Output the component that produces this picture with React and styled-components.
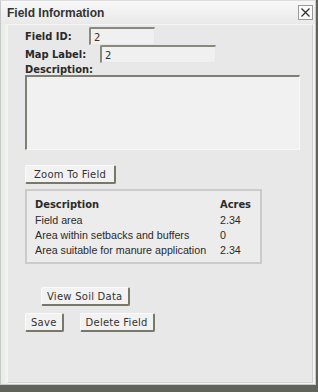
import React from 'react';
import styled, { createGlobalStyle } from 'styled-components';

const Global = createGlobalStyle`
  html, body { margin: 0; padding: 0; }
  body {
    width: 318px;
    height: 392px;
    overflow: hidden;
    background: #5f6359;
    font-family: "DejaVu Sans", Verdana, sans-serif;
  }
`;

const Dialog = styled.div`
  box-sizing: border-box;
  width: 316px;
  height: 385px;
  display: flex;
  flex-direction: column;
  background: linear-gradient(to right, #e6ece4, #f3f3f3 8px);
  border: 1px solid #c8c8c8;
  border-top-color: #dcdcdc;
`;

const TitleBar = styled.div`
  height: 23px;
  display: flex;
  align-items: center;
  justify-content: space-between;
  padding: 0 2px 0 6px;
  background: linear-gradient(to bottom, #f8f8f8, #e9e9e9);
`;

const Title = styled.span`
  font-family: "Liberation Sans", Arial, sans-serif;
  font-weight: bold;
  font-size: 12px;
  color: #333;
`;

const Close = styled.button`
  box-sizing: border-box;
  width: 15px;
  height: 15px;
  padding: 0;
  display: flex;
  align-items: center;
  justify-content: center;
  background: #fafafa;
  border: 1px solid #9a9a9a;
  cursor: pointer;
`;

const Panel = styled.div`
  flex: 1;
  margin: 0 2px 1px 6px;
  padding: 2px 0 0 17px;
  background: #e8e8e8;
  border: 1px solid #f6f6f6;
  border-right-color: #cfcfcf;
  border-bottom-color: #d4d4d4;
  display: flex;
  flex-direction: column;
  color: #222;
`;

const Row = styled.div`
  display: flex;
  align-items: center;
  height: ${p => p.h || 18}px;
`;

const Label = styled.label`
  font-family: "DejaVu Sans Condensed", "DejaVu Sans", sans-serif;
  font-weight: bold;
  font-size: 11px;
  width: ${p => p.w || 'auto'};
  color: #2a2a2a;
`;

const Input = styled.input`
  box-sizing: border-box;
  width: ${p => p.w}px;
  height: 18px;
  padding: 1px 3px 0;
  font-family: "DejaVu Sans", sans-serif;
  font-size: 10px;
  color: #333;
  background: #f0f0f0;
  border: 1px solid #e6e6e6;
  border-top: 2px solid #8a8a7c;
  border-left: 2px solid #8a8a7c;
  border-radius: 2px 0 0 0;
  outline: none;
`;

const TextArea = styled.textarea`
  display: block;
  box-sizing: border-box;
  width: 275px;
  height: 75px;
  margin: 0;
  resize: none;
  background: #f1f1f1;
  border: 1px solid #f8f8f8;
  border-top: 2px solid #7f7f72;
  border-left: 2px solid #7f7f72;
  outline: none;
`;

const Button = styled.button`
  box-sizing: border-box;
  height: 19px;
  padding: 0 ${p => (p.wide ? 8 : 5)}px;
  font-family: "DejaVu Sans", Verdana, sans-serif;
  font-size: 10px;
  letter-spacing: 0.25px;
  color: #333;
  background: #f2f2f2;
  border: 1px solid #fafafa;
  border-right: 2px solid #77776a;
  border-bottom: 2px solid #77776a;
  border-radius: 2px;
  cursor: pointer;
`;

const ButtonRow = styled.div`
  display: flex;
  gap: ${p => p.gap || 0}px;
  padding-left: ${p => p.indent || 0}px;
  margin-top: ${p => p.top || 0}px;
`;

const AreaBox = styled.div`
  box-sizing: border-box;
  width: 237px;
  margin-top: 5px;
  padding: 6px 8px 5px 8px;
  background: #ececec;
  border: 2px solid #cbcbcb;
`;

const AreaTable = styled.table`
  border-collapse: collapse;
  font-family: "Liberation Sans", Tahoma, Arial, sans-serif;
  font-size: 10.7px;
  color: #2a2a2a;
  width: 100%;

  th, td { padding: 0; text-align: left; height: 15px; }
  th { font-family: "DejaVu Sans Condensed", "DejaVu Sans", sans-serif; font-weight: bold; font-size: 11px; }
  td:last-child, th:last-child { width: 32px; }
`;

const rows = [
  ['Field area', '2.34'],
  ['Area within setbacks and buffers', '0'],
  ['Area suitable for manure application', '2.34'],
];

export default function App() {
  return (
    <>
      <Global />
      <Dialog>
        <TitleBar>
          <Title>Field Information</Title>
          <Close aria-label="Close">
            <svg width="11" height="11" viewBox="0 0 11 11">
              <path d="M1.5 1.5 L9.5 9.5 M9.5 1.5 L1.5 9.5" stroke="#333" strokeWidth="1.3" />
            </svg>
          </Close>
        </TitleBar>
        <Panel>
          <Row>
            <Label w="64px">Field ID:</Label>
            <Input w={66} defaultValue="2" />
          </Row>
          <Row>
            <Label w="75px">Map Label:</Label>
            <Input w={116} defaultValue="2" />
          </Row>
          <Row h={12}>
            <Label>Description:</Label>
          </Row>
          <TextArea />
          <ButtonRow top={15}>
            <Button wide>Zoom To Field</Button>
          </ButtonRow>
          <AreaBox>
            <AreaTable>
              <thead>
                <tr><th>Description</th><th>Acres</th></tr>
              </thead>
              <tbody>
                {rows.map(([d, a]) => (
                  <tr key={d}><td>{d}</td><td>{a}</td></tr>
                ))}
              </tbody>
            </AreaTable>
          </AreaBox>
          <ButtonRow indent={16} top={23}>
            <Button>View Soil Data</Button>
          </ButtonRow>
          <ButtonRow gap={16} top={7}>
            <Button>Save</Button>
            <Button>Delete Field</Button>
          </ButtonRow>
        </Panel>
      </Dialog>
    </>
  );
}
